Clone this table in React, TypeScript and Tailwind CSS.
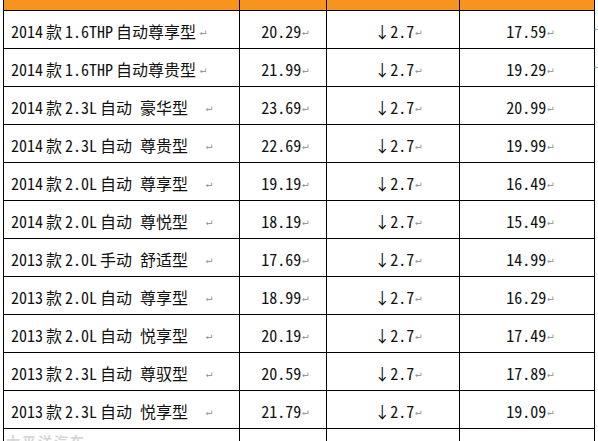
const rows: [string, string, string, boolean][] = [
  ["2014|款|1.6THP|自动尊享型", "20.29", "17.59", false],
  ["2014|款|1.6THP|自动尊贵型", "21.99", "19.29", false],
  ["2014|款|2.3L|自动 豪华型", "23.69", "20.99", true],
  ["2014|款|2.3L|自动 尊贵型", "22.69", "19.99", true],
  ["2014|款|2.0L|自动 尊享型", "19.19", "16.49", true],
  ["2014|款|2.0L|自动 尊悦型", "18.19", "15.49", true],
  ["2013|款|2.0L|手动 舒适型", "17.69", "14.99", true],
  ["2013|款|2.0L|自动 尊享型", "18.99", "16.29", true],
  ["2013|款|2.0L|自动 悦享型", "20.19", "17.49", true],
  ["2013|款|2.3L|自动 尊驭型", "20.59", "17.89", true],
  ["2013|款|2.3L|自动 悦享型", "21.79", "19.09", true],
  ["2013|款|2.3L|自动 尊享型", "22.99", "20.29", true],
];

// Word paragraph mark
const Mark = ({ gap }: { gap?: boolean }) => (
  <span className={`text-[11px] text-[#9a9a9a] ${gap ? "ml-[15px]" : "ml-px"}`}>↵</span>
);

const App = () => {
  return (
    <div
      className="relative h-[441px] w-[598px] overflow-hidden bg-white pl-[3px] text-[16px] text-[#111]"
      style={{ fontFamily: '"Noto Sans Mono CJK SC", "Noto Sans CJK SC", "Liberation Mono", monospace' }}
    >
      <div className="w-[592px]">
        {/* orange header strip, cut off at top */}
        <div className="flex h-[11px] border-b border-l border-black bg-[#f7941d]">
          <div className="w-[236px] border-r border-black" />
          <div className="w-[87px] border-r border-black" />
          <div className="w-[133px] border-r border-black" />
          <div className="w-[135px] border-r border-black" />
        </div>
        {rows.map(([name, price, now, gap], i) => (
          <div key={i} className="flex h-[38px] border-b border-l border-black leading-none">
            <div className="flex w-[236px] items-center gap-[3px] border-r border-black pl-[7px] pt-[2px]">
              {name.split("|").map((part, j) => (
                <span key={j} className="whitespace-pre">
                  {part}
                </span>
              ))}
              <Mark gap={gap} />
            </div>
            <div className="flex w-[87px] items-center justify-center border-r border-black pl-[4px] pt-[2px]">
              <span>{price}</span>
              <Mark />
            </div>
            <div className="flex w-[133px] items-center justify-center border-r border-black pl-[10px] pt-[2px]">
              <span>↓2.7</span>
              <Mark />
            </div>
            <div className="flex w-[135px] items-center justify-center border-r border-black pl-[6px] pt-[2px]">
              <span>{now}</span>
              <Mark />
            </div>
          </div>
        ))}
      </div>
      {/* paragraph marks beyond the table edge */}
      <div className="absolute left-[594px] top-[22px] text-[10px] leading-none text-[#b0b0b0]">↵</div>
      <div className="absolute left-[594px] top-[60px] text-[10px] leading-none text-[#b0b0b0]">↵</div>
      {/* faint site watermark over the last row */}
      <div className="absolute left-[6px] top-[431px] text-[14px] font-bold tracking-[2px] text-[#d6d6d6]">
        太平洋汽车
      </div>
    </div>
  );
};

export default App;
